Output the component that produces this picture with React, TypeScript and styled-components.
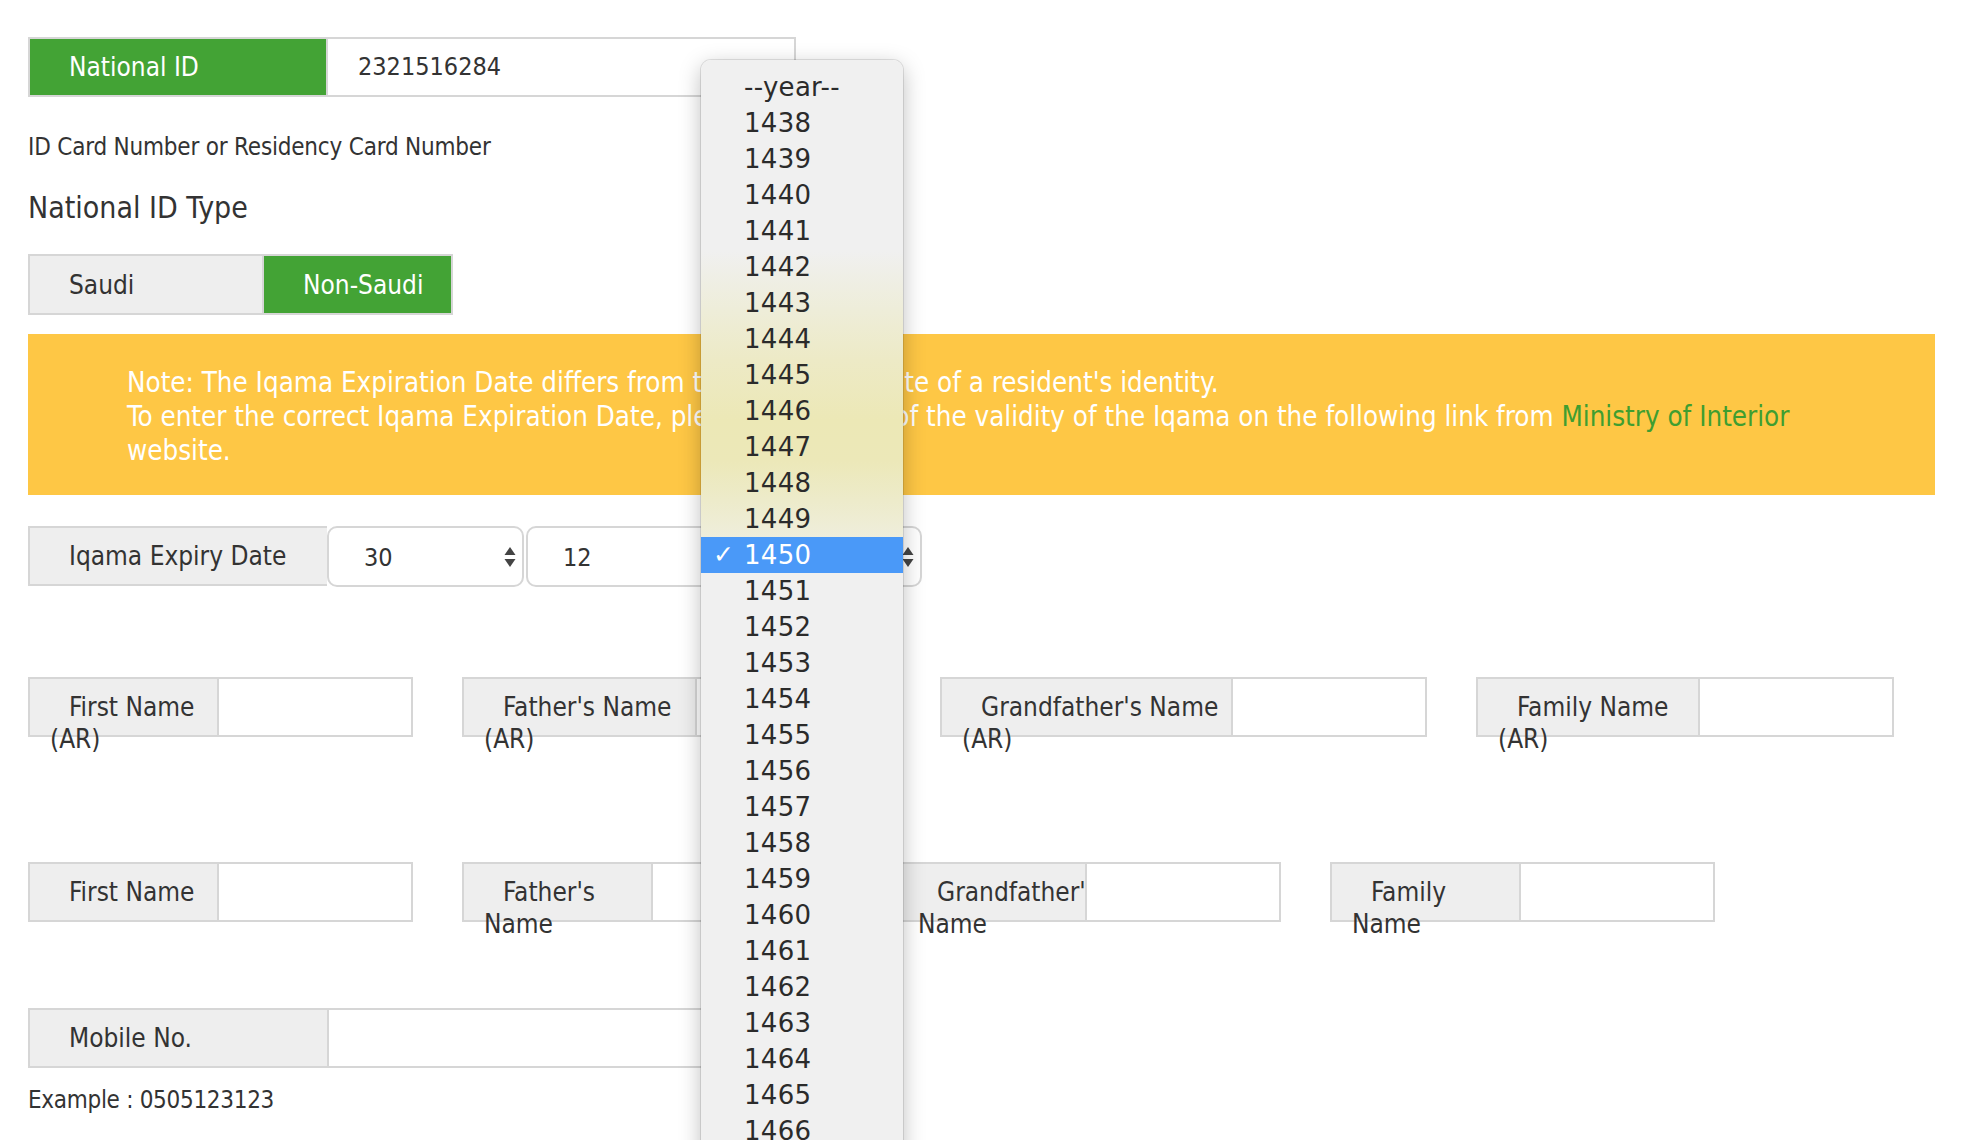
import React from "react";
import styled, { createGlobalStyle, css } from "styled-components";

const GlobalStyle = createGlobalStyle`
  html, body { margin: 0; padding: 0; background: #ffffff; }
  body {
    font-family: "DejaVu Sans Condensed", "DejaVu Sans", sans-serif;
    color: #333333;
    font-size: 24px;
  }
  * { box-sizing: border-box; }
`;

const Page = styled.div`
  position: relative;
  width: 1974px;
  height: 1140px;
  overflow: hidden;
  padding: 37px 0 0 28px;
  display: flex;
  flex-direction: column;
  align-items: flex-start;
`;

const Group = styled.div<{ $mt?: number }>`
  display: flex;
  height: 60px;
  margin-top: ${(p) => p.$mt ?? 0}px;
`;

const Addon = styled.div<{ $w: number; $green?: boolean }>`
  width: ${(p) => p.$w}px;
  height: 60px;
  flex: none;
  border: 2px solid #d6d6d6;
  border-right: 0;
  background: ${(p) => (p.$green ? "#43a335" : "#eeeeee")};
  color: ${(p) => (p.$green ? "#ffffff" : "#333333")};
  padding: 12px 20px 0 20px;
  text-indent: 19px;
  line-height: 32px;
  white-space: nowrap;
  font-size: 26px;
`;

const Field = styled.div<{ $w: number }>`
  width: ${(p) => p.$w}px;
  height: 60px;
  flex: none;
  border: 2px solid #d6d6d6;
  background: #ffffff;
  padding: 12px 0 0 30px;
  line-height: 32px;
  font-size: 25px;
  color: #333333;
`;

const Help = styled.div<{ $mt: number }>`
  margin-top: ${(p) => p.$mt}px;
  line-height: 30px;
  font-size: 24px;
  letter-spacing: -0.2px;
  color: #333333;
`;

const SectionTitle = styled.div`
  margin-top: 28px;
  font-size: 30px;
  line-height: 36px;
  color: #333333;
`;

const Toggle = styled.div`
  display: flex;
  margin-top: 28px;
  height: 61px;
  border: 2px solid #d6d6d6;
`;

const ToggleBtn = styled.div<{ $w: number; $active?: boolean }>`
  width: ${(p) => p.$w}px;
  height: 57px;
  padding-left: 39px;
  line-height: 59px;
  font-size: 26px;
  ${(p) =>
    p.$active
      ? css`
          background: #43a335;
          color: #ffffff;
          border-left: 2px solid #d6d6d6;
        `
      : css`
          background: #eeeeee;
          color: #333333;
        `}
`;

const Banner = styled.div`
  margin-top: 19px;
  width: 1907px;
  height: 161px;
  background: #fec745;
  color: #ffffff;
  padding: 31px 0 0 99px;
  line-height: 34px;
  font-size: 27.5px;
`;

const BannerLink = styled.span`
  color: #3f9e30;
`;

const DateRow = styled.div`
  display: flex;
  margin-top: 31px;
  height: 61px;
`;

const DateSelect = styled.div<{ $ml?: number }>`
  position: relative;
  width: 197px;
  height: 61px;
  margin-left: ${(p) => p.$ml ?? 0}px;
  border: 2px solid #d6d6d6;
  border-radius: 10px;
  background: #ffffff;
  padding-left: 35px;
  line-height: 59px;
  font-size: 25px;
  color: #333333;
`;

const Arrows = styled.svg`
  position: absolute;
  right: 5px;
  top: 18px;
`;

const NameRow = styled.div<{ $mt: number }>`
  display: flex;
  gap: 49px;
  margin-top: ${(p) => p.$mt}px;
`;

const NameGroup = styled.div`
  display: flex;
  height: 60px;
`;

const Example = styled.div`
  margin-top: 17px;
  line-height: 30px;
  font-size: 24px;
  letter-spacing: -0.3px;
  color: #333333;
`;

/* Native select popup menu (macOS style) */
const Menu = styled.div`
  position: absolute;
  left: 701px;
  top: 60px;
  width: 202px;
  height: 1120px;
  border-radius: 10px 10px 0 0;
  background: linear-gradient(
    to bottom,
    #f0f0f0 0px,
    #f0f0f0 190px,
    #eeedd9 250px,
    #edeac6 300px,
    #ece8b6 360px,
    #ece8b8 400px,
    #edebca 440px,
    #efeedd 480px,
    #f0f0f0 515px,
    #f0f0f0 100%
  );
  box-shadow: 0 0 0 1px rgba(0, 0, 0, 0.1), 0 6px 22px rgba(0, 0, 0, 0.26);
  padding-top: 9px;
  font-family: "DejaVu Sans", sans-serif;
  z-index: 5;
`;

const MenuItem = styled.div<{ $selected?: boolean }>`
  position: relative;
  height: 36px;
  line-height: 36px;
  padding-left: 43px;
  font-size: 26px;
  letter-spacing: 0.3px;
  color: ${(p) => (p.$selected ? "#ffffff" : "#2b2b2b")};
  background: ${(p) => (p.$selected ? "#4a99f8" : "transparent")};
`;

const Check = styled.span`
  position: absolute;
  left: 12px;
  top: 0;
  font-size: 25px;
  font-weight: bold;
  color: #ffffff;
`;

const UpDown = () => (
  <Arrows width="14" height="22" viewBox="0 0 14 22">
    <path d="M7 1 L12.5 9 L1.5 9 Z" fill="#444" />
    <path d="M7 21 L12.5 13 L1.5 13 Z" fill="#444" />
  </Arrows>
);

const years: string[] = ["--year--"];
for (let y = 1438; y <= 1470; y++) years.push(String(y));

const arNames = [
  { label: "First Name", w: 189 },
  { label: "Father's Name", w: 233 },
  { label: "Grandfather's Name", w: 291 },
  { label: "Family Name", w: 222 },
];

const enNames: React.ReactNode[] = [
  "First Name",
  <>
    Father's
    <br />
    Name
  </>,
  <>
    Grandfather's
    <br />
    Name
  </>,
  <>
    Family
    <br />
    Name
  </>,
];

export default function App() {
  return (
    <>
      <GlobalStyle />
      <Page>
        <Group>
          <Addon $w={298} $green>
            National ID
          </Addon>
          <Field $w={470}>2321516284</Field>
        </Group>
        <Help $mt={35}>ID Card Number or Residency Card Number</Help>
        <SectionTitle>National ID Type</SectionTitle>
        <Toggle>
          <ToggleBtn $w={232}>Saudi</ToggleBtn>
          <ToggleBtn $w={189} $active>
            Non-Saudi
          </ToggleBtn>
        </Toggle>
        <Banner>
          Note: The Iqama Expiration Date differs from the expiration date of a resident's identity.
          <br />
          To enter the correct Iqama Expiration Date, please check end of the validity of the Iqama on the
          following link from <BannerLink>Ministry of Interior</BannerLink>
          <br />
          website.
        </Banner>
        <DateRow>
          <Addon $w={299}>Iqama Expiry Date</Addon>
          <DateSelect>
            30
            <UpDown />
          </DateSelect>
          <DateSelect $ml={2}>
            12
            <UpDown />
          </DateSelect>
          <DateSelect $ml={2}>
            1450
            <UpDown />
          </DateSelect>
        </DateRow>
        <NameRow $mt={90}>
          {arNames.map((n) => (
            <NameGroup key={n.label}>
              <Addon $w={n.w}>
                {n.label}
                <br />
                (AR)
              </Addon>
              <Field $w={196} />
            </NameGroup>
          ))}
        </NameRow>
        <NameRow $mt={125}>
          {enNames.map((n, i) => (
            <NameGroup key={i}>
              <Addon $w={189}>{n}</Addon>
              <Field $w={196} />
            </NameGroup>
          ))}
        </NameRow>
        <Group $mt={86}>
          <Addon $w={299}>Mobile No.</Addon>
          <Field $w={469} />
        </Group>
        <Example>Example : 0505123123</Example>

        <Menu>
          {years.map((y) => (
            <MenuItem key={y} $selected={y === "1450"}>
              {y === "1450" && <Check>✓</Check>}
              {y}
            </MenuItem>
          ))}
        </Menu>
      </Page>
    </>
  );
}
